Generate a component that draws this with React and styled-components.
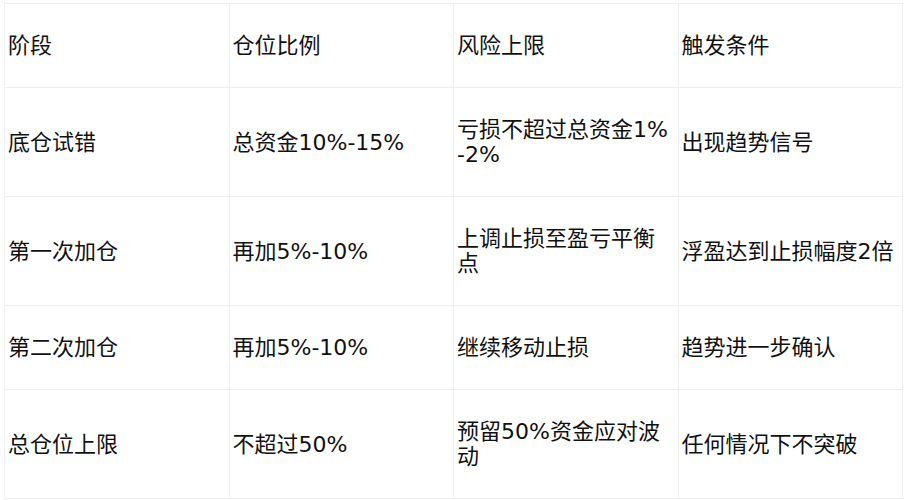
import React from "react";
import styled, { createGlobalStyle } from "styled-components";

const GlobalStyle = createGlobalStyle`
  body {
    margin: 0;
    background: #fff;
  }
`;

const rows = [
  ["阶段", "仓位比例", "风险上限", "触发条件"],
  ["底仓试错", "总资金10%-15%", "亏损不超过总资金1%-2%", "出现趋势信号"],
  ["第一次加仓", "再加5%-10%", "上调止损至盈亏平衡点", "浮盈达到止损幅度2倍"],
  ["第二次加仓", "再加5%-10%", "继续移动止损", "趋势进一步确认"],
  ["总仓位上限", "不超过50%", "预留50%资金应对波动", "任何情况下不突破"],
];

export default function App() {
  return (
    <Page>
      <GlobalStyle />
      <Table>
        <tbody>
          {rows.map((row, i) => (
            <Row key={i}>
              {row.map((cell, j) => (
                <Cell key={j}>{cell}</Cell>
              ))}
            </Row>
          ))}
        </tbody>
      </Table>
    </Page>
  );
}

const Page = styled.div`
  padding: 3px 4px;
`;

const Table = styled.table`
  width: 899px;
  border-collapse: collapse;
  table-layout: fixed;
  font-family: "DejaVu Sans", "Noto Sans CJK SC", sans-serif;
  font-size: 22px;
  line-height: 25px;
  color: #111;
`;

const Row = styled.tr``;

const Cell = styled.td`
  border: 1px solid #efefef;
  padding: 29px 3px;
  vertical-align: middle;
  text-align: left;
  word-break: break-all;
`;
